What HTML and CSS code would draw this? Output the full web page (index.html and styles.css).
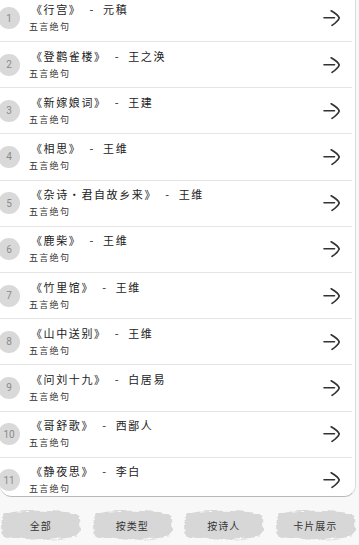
FILE: index.html
```html
<!DOCTYPE html>
<html lang="zh">
<head>
  <meta charset="UTF-8" />
  <meta name="viewport" content="width=device-width, initial-scale=1.0"/>
  <title>唐诗列表</title>
  <link rel="stylesheet" href="styles.css">
</head>
<body>
  <svg class="defs" width="0" height="0" aria-hidden="true">
    <defs>
      <filter id="brush" x="-10%" y="-20%" width="120%" height="140%">
        <feTurbulence type="fractalNoise" baseFrequency="0.08 0.3" numOctaves="2" seed="4" result="noise"/>
        <feDisplacementMap in="SourceGraphic" in2="noise" scale="5" xChannelSelector="R" yChannelSelector="G" result="rough"/>
        <feGaussianBlur in="rough" stdDeviation="0.7"/>
      </filter>
      <symbol id="arrow" viewBox="0 0 18 18">
        <path d="M1 8.8 H11.5" fill="none" stroke="#333" stroke-width="1.6" stroke-linecap="round"/>
        <path d="M8.2 1.8 C12 4 15.5 6.5 16.2 9 C15.2 11.8 12.2 14.3 9 16.4" fill="none" stroke="#333" stroke-width="1.7" stroke-linecap="round" stroke-linejoin="round"/>
      </symbol>
    </defs>
  </svg>

  <div class="poem-card">
    <ul class="poem-list">
      <li class="poem-row"><span class="num">1</span><div class="info"><div class="title">《行宫》  -  元稹</div><div class="kind">五言绝句</div></div><svg class="go"><use href="#arrow"/></svg></li>
      <li class="poem-row"><span class="num">2</span><div class="info"><div class="title">《登鹳雀楼》  -  王之涣</div><div class="kind">五言绝句</div></div><svg class="go"><use href="#arrow"/></svg></li>
      <li class="poem-row"><span class="num">3</span><div class="info"><div class="title">《新嫁娘词》  -  王建</div><div class="kind">五言绝句</div></div><svg class="go"><use href="#arrow"/></svg></li>
      <li class="poem-row"><span class="num">4</span><div class="info"><div class="title">《相思》  -  王维</div><div class="kind">五言绝句</div></div><svg class="go"><use href="#arrow"/></svg></li>
      <li class="poem-row"><span class="num">5</span><div class="info"><div class="title">《杂诗·君自故乡来》  -  王维</div><div class="kind">五言绝句</div></div><svg class="go"><use href="#arrow"/></svg></li>
      <li class="poem-row"><span class="num">6</span><div class="info"><div class="title">《鹿柴》  -  王维</div><div class="kind">五言绝句</div></div><svg class="go"><use href="#arrow"/></svg></li>
      <li class="poem-row"><span class="num">7</span><div class="info"><div class="title">《竹里馆》  -  王维</div><div class="kind">五言绝句</div></div><svg class="go"><use href="#arrow"/></svg></li>
      <li class="poem-row"><span class="num">8</span><div class="info"><div class="title">《山中送别》  -  王维</div><div class="kind">五言绝句</div></div><svg class="go"><use href="#arrow"/></svg></li>
      <li class="poem-row"><span class="num">9</span><div class="info"><div class="title">《问刘十九》  -  白居易</div><div class="kind">五言绝句</div></div><svg class="go"><use href="#arrow"/></svg></li>
      <li class="poem-row"><span class="num">10</span><div class="info"><div class="title">《哥舒歌》  -  西鄙人</div><div class="kind">五言绝句</div></div><svg class="go"><use href="#arrow"/></svg></li>
      <li class="poem-row"><span class="num">11</span><div class="info"><div class="title">《静夜思》  -  李白</div><div class="kind">五言绝句</div></div><svg class="go"><use href="#arrow"/></svg></li>
    </ul>
  </div>

  <nav class="tabs">
    <button class="tab"><svg class="blob" viewBox="0 0 80 30" preserveAspectRatio="none"><path d="M4 5 C20 1 60 2 76 5 C80 9 80 21 76 25 C58 29 22 29 4 25 C0 20 0 10 4 5 Z" fill="#d7d7d7" filter="url(#brush)"/></svg><span>全部</span></button>
    <button class="tab"><svg class="blob" viewBox="0 0 80 30" preserveAspectRatio="none"><path d="M4 5 C20 1 60 2 76 5 C80 9 80 21 76 25 C58 29 22 29 4 25 C0 20 0 10 4 5 Z" fill="#d7d7d7" filter="url(#brush)"/></svg><span>按类型</span></button>
    <button class="tab"><svg class="blob" viewBox="0 0 80 30" preserveAspectRatio="none"><path d="M4 5 C20 1 60 2 76 5 C80 9 80 21 76 25 C58 29 22 29 4 25 C0 20 0 10 4 5 Z" fill="#d7d7d7" filter="url(#brush)"/></svg><span>按诗人</span></button>
    <button class="tab"><svg class="blob" viewBox="0 0 80 30" preserveAspectRatio="none"><path d="M4 5 C20 1 60 2 76 5 C80 9 80 21 76 25 C58 29 22 29 4 25 C0 20 0 10 4 5 Z" fill="#d7d7d7" filter="url(#brush)"/></svg><span>卡片展示</span></button>
  </nav>
</body>
</html>
```

FILE: styles.css
```css
body {
  font-family: "Noto Sans CJK SC", "Liberation Sans", sans-serif;
  background-color: #f8f8f8;
  margin: 0;
  padding: 0;
  width: 359px;
  height: 545px;
  overflow: hidden;
}

.defs {
  position: absolute;
  width: 0;
  height: 0;
}

.poem-card {
  width: 356px;
  height: 497px;
  box-sizing: border-box;
  background-color: #ffffff;
  border-right: 1px solid #dcdcdc;
  border-bottom: 1px solid #b9b9b9;
  border-radius: 0 0 12px 12px;
  overflow: hidden;
}

.poem-list {
  list-style: none;
  margin: -4.2px 0 0 0;
  padding: 0;
}

.poem-row {
  display: flex;
  align-items: center;
  height: 46.2px;
  box-sizing: border-box;
  border-bottom: 1px solid #e4e4e4;
  margin-right: 3px;
}

.num {
  flex: none;
  width: 22px;
  height: 22px;
  margin-left: -2px;
  border-radius: 50%;
  background-color: #d9d9d9;
  color: #8a8a8a;
  font-family: "Roboto", "Liberation Sans", sans-serif;
  font-size: 10px;
  display: flex;
  align-items: center;
  justify-content: center;
}

.info {
  flex: 1;
  margin-left: 10px;
  padding-bottom: 1px;
}

.title {
  font-size: 11px;
  letter-spacing: 1.6px;
  color: #222;
  line-height: 15px;
  margin-left: 1px;
  white-space: pre;
}

.kind {
  font-size: 9px;
  letter-spacing: 1.3px;
  color: #333;
  line-height: 13px;
  margin-top: 3px;
  margin-left: -1px;
}

.go {
  flex: none;
  width: 18px;
  height: 18px;
  margin-right: 11px;
}

.tabs {
  display: grid;
  grid-template-columns: repeat(4, 1fr);
  gap: 10px;
  padding: 11px 3px 0 0;
}

.tab {
  position: relative;
  height: 34px;
  border: none;
  background: none;
  padding: 0;
  font-family: inherit;
  font-size: 10px;
  color: #333;
  letter-spacing: 1px;
  cursor: pointer;
}

.blob {
  position: absolute;
  left: 0;
  top: 0;
  width: 100%;
  height: 100%;
}

.tab span {
  position: relative;
}
```
